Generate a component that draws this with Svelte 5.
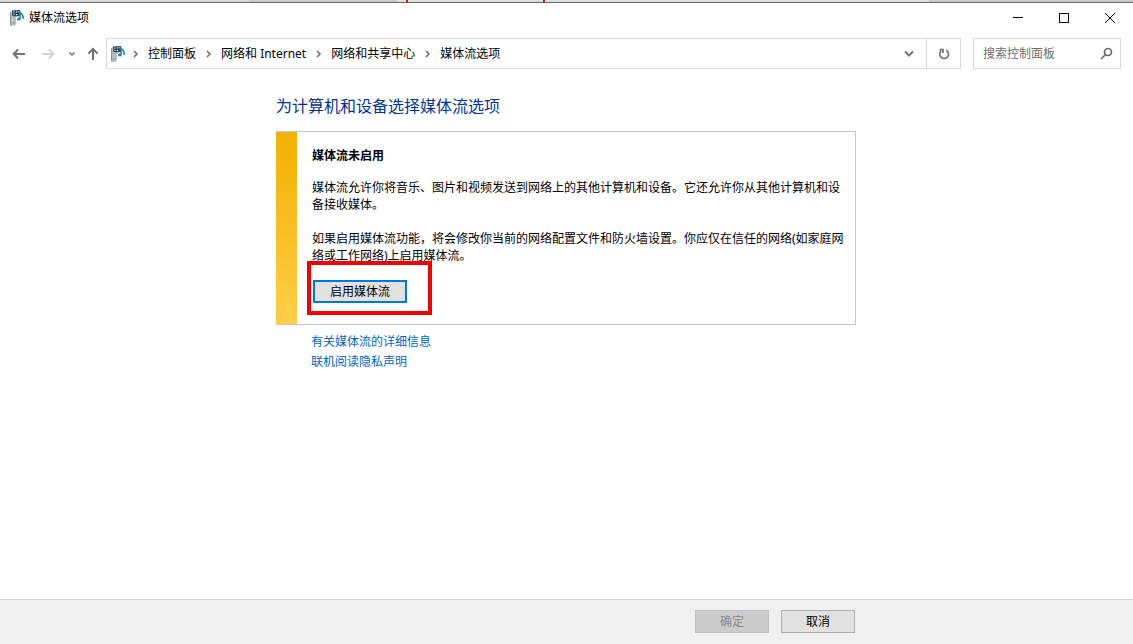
<script>
  const crumbs = ['控制面板', '网络和 Internet', '网络和共享中心', '媒体流选项'];
</script>

{#snippet mediaIcon()}
  <svg class="media" width="16" height="18" viewBox="0 0 16 18" aria-hidden="true">
    <path d="M1 3 3 1.500h3.500V15L5 17H2l-1-1z" fill="#c3c6c5" />
    <path d="M1 3.500 2.200 4v12.800L1 16z" fill="#8d9291" />
    <path d="M5.500 7h1v8.500l-1 1z" fill="#9a9f9e" />
    <path d="M3 7.500h2v1H3zM3 13h2v1.500H3z" fill="#8fa39a" />
    <path d="M3 1.500 11 1l.500 6L7 7.500 3 6.500z" fill="#2c4450" />
    <path d="M4.200 2.500h1.300v1.200H4.200zM7 2.200h1.300v1.300H7zM9.300 2h1v1.200h-1zM4.500 5h1.200v1H4.500zM7 5h1.300v1.200H7z" fill="#d3e3e6" />
    <path d="M3 3.800h2.500v1H3z" fill="#3c8a5c" />
    <path d="M11 10V2.500c.300 2.200 4.200 3 3 7.500" fill="none" stroke="#2583bf" stroke-width="1.500" />
    <ellipse cx="9.800" cy="10" rx="2" ry="1.500" fill="#2583bf" />
  </svg>
{/snippet}

{#snippet chevron()}
  <svg class="chevron" width="6" height="8" viewBox="0 0 6 8" aria-hidden="true">
    <path d="M1 1 4 4 1 7" />
  </svg>
{/snippet}

<div class="window" lang="zh-CN">
  <div class="backdrop"><span></span></div>

  <header class="titlebar">
    {@render mediaIcon()}
    <span class="title">媒体流选项</span>
    <div class="controls">
      <button aria-label="最小化"><svg width="12" height="12" viewBox="0 0 12 12"><path d="M1 5.500h10" /></svg></button>
      <button aria-label="最大化"><svg width="12" height="12" viewBox="0 0 12 12"><path d="M1.500 1.500h9v9h-9z" /></svg></button>
      <button aria-label="关闭"><svg width="12" height="12" viewBox="0 0 12 12"><path d="m1 1 10 10M11 1 1 11" /></svg></button>
    </div>
  </header>

  <div class="toolbar">
    <nav class="history" aria-label="导航">
      <button aria-label="后退"><svg width="14" height="12" viewBox="0 0 14 12"><path d="M13 6H2M6 1.500 1.700 6 6 10.500" /></svg></button>
      <button aria-label="前进" class="faint"><svg width="14" height="12" viewBox="0 0 14 12"><path d="M0 6h11M7 1.500 11.300 6 7 10.500" /></svg></button>
      <button aria-label="最近的位置" class="recent"><svg width="8" height="6" viewBox="0 0 8 6"><path d="m1.500 1.500 2.500 2.500 2.500-2.500" /></svg></button>
      <button aria-label="上移"><svg width="12" height="14" viewBox="0 0 12 14"><path d="M6 13V2M1.500 6.500 6 2l4.500 4.500" /></svg></button>
    </nav>
    <div class="address">
      {@render mediaIcon()}
      {#each crumbs as crumb}
        {@render chevron()}
        <a href="#top">{crumb}</a>
      {/each}
      <button class="drop" aria-label="以前的位置"><svg width="12" height="8" viewBox="0 0 12 8"><path d="m2 1.500 4 4 4-4" /></svg></button>
      <button class="refresh" aria-label="刷新"><svg width="12" height="14" viewBox="0 0 12 14"><path d="M8.200 3.200A4.400 4.400 0 1 1 3.300 3.700M1.500 2.500H5V6" /></svg></button>
    </div>
    <label class="search">
      <input type="text" placeholder="搜索控制面板" aria-label="搜索控制面板" />
      <svg width="14" height="14" viewBox="0 0 14 14" aria-hidden="true"><circle cx="9" cy="5" r="3.500" /><path d="M6.500 7.500 2 12" /></svg>
    </label>
  </div>

  <main>
    <div class="column">
      <h1>为计算机和设备选择媒体流选项</h1>
      <section class="notice">
        <div class="stripe"></div>
        <div class="body">
          <h2>媒体流未启用</h2>
          <p>媒体流允许你将音乐、图片和视频发送到网络上的其他计算机和设备。它还允许你从其他计算机和设备接收媒体。</p>
          <p>如果启用媒体流功能，将会修改你当前的网络配置文件和防火墙设置。你应仅在信任的网络(如家庭网络或工作网络)上启用媒体流。</p>
          <div class="action">
            <button class="enable">启用媒体流</button>
            <span class="mark"></span>
          </div>
        </div>
      </section>
      <div class="links">
        <a href="#details">有关媒体流的详细信息</a>
        <a href="#privacy">联机阅读隐私声明</a>
      </div>
    </div>
  </main>

  <footer>
    <div class="column buttons">
      <button disabled>确定</button>
      <button>取消</button>
    </div>
  </footer>
</div>

<style>
  :global(body) {
    margin: 0;
  }
  .window {
    display: flex;
    flex-direction: column;
    min-height: 100vh;
    background: #fff;
    color: #000;
    font: 12px/17px 'Noto Sans', 'Noto Sans CJK SC', sans-serif;
  }
  .window * {
    box-sizing: border-box;
  }
  button,
  input {
    margin: 0;
    padding: 0;
    border: 0;
    background: none;
    color: inherit;
    font: inherit;
  }
  a {
    color: inherit;
    text-decoration: none;
  }
  svg {
    display: block;
    flex: none;
    fill: none;
  }

  .backdrop {
    display: flex;
    justify-content: center;
    height: 3px;
    border-bottom: 1px solid #686868;
    background: linear-gradient(90deg, #d9d9d9 22%, #cbcbcb 22% 35%, #dedede 35% 82%, #c9c9c9 82%);
  }
  .backdrop span {
    width: 139px;
    margin-right: 182px;
    border: solid #c4161c;
    border-width: 0 2px;
  }

  .titlebar {
    display: flex;
    align-items: center;
    height: 29px;
    padding-left: 9px;
  }
  .title {
    margin-left: 4px;
  }
  .controls {
    display: flex;
    margin-left: auto;
  }
  .controls button {
    display: grid;
    place-items: center;
    width: 46px;
    height: 29px;
  }
  .controls svg {
    stroke: #000;
  }

  .toolbar {
    display: flex;
    height: 37px;
    padding: 6px 12px 0 12px;
  }
  .history {
    display: flex;
    align-items: center;
    width: 94px;
    gap: 16px;
  }
  .history svg,
  .address button svg {
    stroke: #737373;
    stroke-width: 2;
  }
  .history .faint svg {
    stroke: #d2d2d2;
  }
  .history .recent {
    margin-right: -5px;
    margin-left: -4px;
  }
  .history .recent svg {
    stroke-width: 1.5;
  }
  .address {
    display: flex;
    flex: 1;
    align-items: center;
    border: 1px solid #d9d9d9;
    padding-left: 3px;
    white-space: nowrap;
  }
  .address a {
    padding-bottom: 1px;
  }
  .chevron {
    margin: 0 9px 0 10px;
    stroke: #6a6a6a;
    stroke-width: 1.5;
  }
  .media + .chevron {
    margin-left: 7px;
  }
  .address button {
    display: grid;
    place-items: center;
    width: 34px;
    height: 29px;
  }
  .address .drop {
    margin-left: auto;
  }
  .address .refresh {
    border-left: 1px solid #d9d9d9;
  }
  .address .refresh svg {
    stroke-width: 1.7;
  }
  .search {
    display: flex;
    align-items: center;
    width: 148px;
    margin-left: 12px;
    padding: 0 7px 0 9px;
    border: 1px solid #d9d9d9;
  }
  .search input {
    flex: 1;
    min-width: 0;
    outline: 0;
  }
  .search input::placeholder {
    color: #6d6d6d;
    opacity: 1;
  }
  .search svg {
    stroke: #6a6a6a;
    stroke-width: 1.7;
  }

  main {
    flex: 1;
    padding-right: 1px;
  }
  .column {
    width: 100%;
    max-width: 580px;
    margin: 0 auto;
  }
  h1 {
    margin: 0;
    padding: 26px 0 13px;
    color: #003399;
    font-size: 16px;
    font-weight: 400;
    line-height: 23px;
  }
  .notice {
    display: flex;
    border: 1px solid #c8c8c8;
    border-left: 0;
  }
  .stripe {
    flex: none;
    width: 21px;
    background: linear-gradient(#f2b100, #ffcd47);
  }
  .body {
    flex: 1;
    padding: 15px 10px 21px 15px;
  }
  h2 {
    margin: 0 0 15px;
    font-size: 12px;
    font-weight: 700;
    line-height: 17px;
  }
  p {
    margin: 0;
  }
  p + p {
    margin: 17px 0 16px;
  }
  .action {
    position: relative;
    width: 94px;
    margin-left: 1px;
  }
  .enable {
    display: block;
    width: 94px;
    height: 23px;
    border: 2px solid #0078d7;
    background: #e1e1e1;
  }
  .mark {
    position: absolute;
    inset: -19px -25px -12px -6px;
    border: 4px solid #f40000;
    pointer-events: none;
  }
  .links {
    display: flex;
    flex-direction: column;
    align-items: flex-start;
    gap: 3px;
    padding: 8px 35px;
    color: #0066cc;
  }

  footer {
    height: 45px;
    padding: 10px 1px 0 0;
    border-top: 1px solid #cfcfcf;
    background: #f0f0f0;
  }
  .buttons {
    display: flex;
    justify-content: flex-end;
    gap: 12px;
    padding-right: 1px;
  }
  .buttons button {
    width: 74px;
    height: 23px;
    border: 1px solid #adadad;
    background: #e1e1e1;
  }
  .buttons button:disabled {
    border-color: #bfbfbf;
    background: #cccccc;
    color: #8a8a8a;
  }
</style>
